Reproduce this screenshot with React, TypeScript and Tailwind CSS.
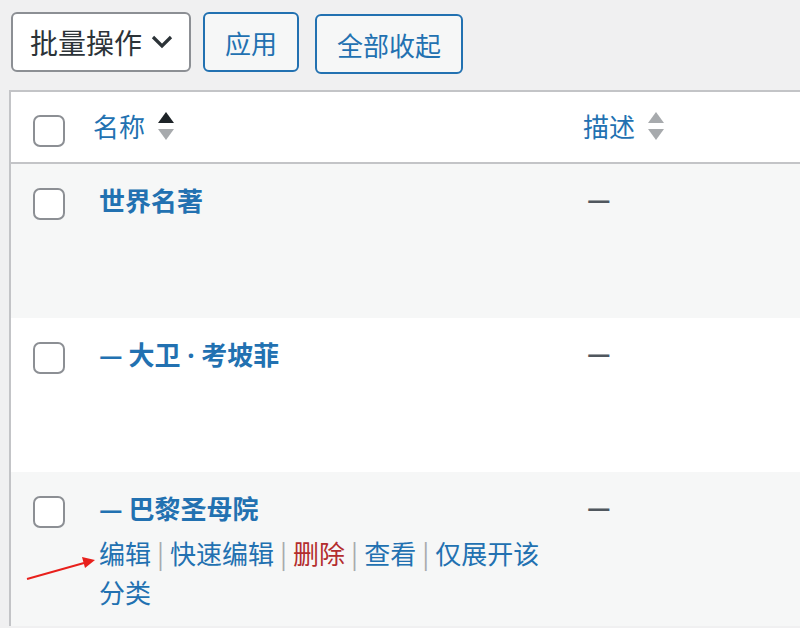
import React from "react";

const font = { fontFamily: '"Noto Sans CJK SC", "Noto Sans", sans-serif' };
const latin = { fontFamily: '"Noto Sans", sans-serif' };

function Check() {
  return <div className="w-[32px] h-[32px] rounded-[7px] border-2 border-[#8c8f94] bg-white shrink-0" />;
}

function Sort({ active }: { active?: boolean }) {
  return (
    <svg width="18" height="30" viewBox="0 0 18 30" className="shrink-0">
      <polygon points="9,0 17,11 1,11" fill={active ? "#1d2327" : "#a7aaad"} />
      <polygon points="1,17 17,17 9,28" fill="#a7aaad" />
    </svg>
  );
}

function Sep() {
  return <span className="inline-block text-[#a7aaad] mx-[6px]">|</span>;
}

function Row({ title, bg, actions }: { title: React.ReactNode; bg: string; actions?: boolean }) {
  return (
    <div className={`flex h-[154px] ${bg}`}>
      <div className="w-[72px] pl-[22px] pt-[24px] shrink-0">
        <Check />
      </div>
      <div className="w-[486px] pl-[16px] pt-[16px] shrink-0">
        <div className="text-[26px] leading-[39px] font-bold text-[#2271b1]">{title}</div>
        {actions && (
          <div className="w-[460px] pt-[6px] text-[26px] leading-[39px] text-[#2271b1]">
            <span>编辑</span>
            <Sep />
            <span>快速编辑</span>
            <Sep />
            <span className="text-[#b32d2e]">删除</span>
            <Sep />
            <span>查看</span>
            <Sep />
            <span>仅展开该分类</span>
          </div>
        )}
      </div>
      <div className="pl-[18px] pt-[14px] text-[26px] leading-[39px] font-bold text-[#50575e]">—</div>
    </div>
  );
}

export default function App() {
  return (
    <div className="relative w-[800px] h-[628px] overflow-hidden bg-[#f0f0f1]" style={font}>
      <div className="flex items-start pt-[12px] pl-[11px]">
        <div className="flex items-center justify-between w-[180px] h-[60px] border-2 border-[#8c8f94] rounded-[6px] bg-white pl-[17px] pr-[16px]">
          <span className="text-[28px] text-[#2c3338] leading-none">批量操作</span>
          <svg width="22" height="14" viewBox="0 0 22 14">
            <polyline points="2,2 11,11 20,2" fill="none" stroke="#2c3338" strokeWidth="3.2" />
          </svg>
        </div>
        <div className="ml-[12px] flex items-center justify-center w-[96px] h-[60px] border-2 border-[#2271b1] rounded-[6px] bg-[#f6f7f7] text-[26px] text-[#2271b1]">
          应用
        </div>
        <div className="ml-[16px] mt-[2px] flex items-center justify-center w-[148px] h-[60px] border-2 border-[#2271b1] rounded-[6px] bg-[#f6f7f7] text-[26px] text-[#2271b1]">
          全部收起
        </div>
      </div>
      <div className="mt-[16px] ml-[9px] w-[820px] border-l-2 border-t-2 border-[#c3c4c7] bg-white">
        <div className="flex h-[72px] border-b-2 border-[#c3c4c7] bg-white">
          <div className="w-[72px] pl-[22px] pt-[23px] shrink-0">
            <Check />
          </div>
          <div className="w-[486px] pl-[10px] shrink-0 flex items-center gap-[12px]">
            <span className="text-[26px] text-[#2271b1] -mt-[4px]">名称</span>
            <Sort active />
          </div>
          <div className="pl-[14px] flex items-center gap-[12px]">
            <span className="text-[26px] text-[#2271b1] -mt-[4px]">描述</span>
            <Sort />
          </div>
        </div>
        <Row title="世界名著" bg="bg-[#f6f7f7]" />
        <Row
          title={
            <>
              — 大卫<span style={latin}> · </span>考坡菲
            </>
          }
          bg="bg-white"
        />
        <Row title="— 巴黎圣母院" bg="bg-[#f6f7f7]" actions />
      </div>
      <svg className="absolute left-0 top-0" width="800" height="628" viewBox="0 0 800 628">
        <line x1="27" y1="579" x2="84" y2="563" stroke="#e8201c" strokeWidth="2" />
        <polygon points="95,560 82,557 85,568" fill="#e8201c" />
      </svg>
    </div>
  );
}
